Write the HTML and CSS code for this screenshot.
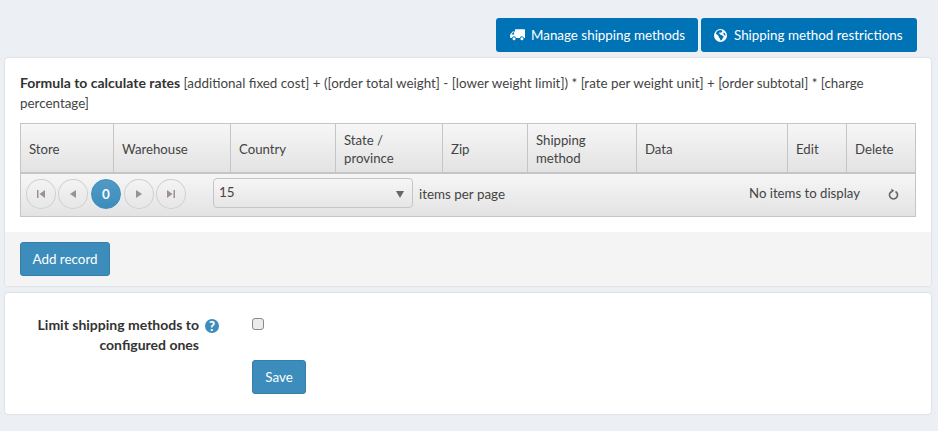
FILE: index.html

```html
<!DOCTYPE html>
<html lang="en">
<head>
    <meta charset="UTF-8">
    <meta name="viewport" content="width=device-width, initial-scale=1.0">
    <title>Shipping rates</title>
    <link rel="stylesheet" href="styles.css">
</head>
<body>
    <main class="page">
        <div class="top-actions">
            <a class="btn btn-top btn-manage">
                <svg class="btn-icon" viewBox="0 0 18 14" width="15" height="12"><path fill="#fff" d="M6 0h11a1 1 0 0 1 1 1v9.500h-1.200a2.600 2.600 0 0 0-5.100 0H7.300a2.600 2.600 0 0 0-5.100 0H1a1 1 0 0 1-1-1V6.600L3.200 2.800H6zM3.800 3.700 1.700 6.300h3.200V3.700zM4.800 9.600a1.800 1.800 0 1 1 0 3.600 1.800 1.800 0 0 1 0-3.600zm9.500 0a1.800 1.800 0 1 1 0 3.600 1.800 1.800 0 0 1 0-3.600z"/></svg>
                Manage shipping methods
            </a>
            <a class="btn btn-top btn-restrict">
                <svg class="btn-icon" viewBox="0 0 14 14" width="13" height="13"><path fill="#fff" fill-rule="evenodd" d="M7 0a7 7 0 1 1 0 14A7 7 0 0 1 7 0zM3.200 2.400 2 5.200l2.600 1.700.6 2 1.200 1.300.6 2.300 1.300-.6 1.300-2.300.9-1.400-1.500-1.300-2-.6-.8-1.100L5 4.800l1-1 1.600.2L9 2.600 7.900 1.200 5.400 1.300zM10.600 3.400 10 5l1 1.600 1.600.4a5.800 5.800 0 0 0-2-3.600z"/></svg>
                Shipping method restrictions
            </a>
        </div>

        <section class="card">
            <div class="card-body">
                <p class="formula"><strong>Formula to calculate rates</strong> [additional fixed cost] + ([order total weight] - [lower weight limit]) * [rate per weight unit] + [order subtotal] * [charge percentage]</p>
                <div class="grid">
                    <div class="grid-header">
                        <div class="grid-th">Store</div>
                        <div class="grid-th">Warehouse</div>
                        <div class="grid-th">Country</div>
                        <div class="grid-th">State /<br>province</div>
                        <div class="grid-th">Zip</div>
                        <div class="grid-th">Shipping<br>method</div>
                        <div class="grid-th">Data</div>
                        <div class="grid-th">Edit</div>
                        <div class="grid-th">Delete</div>
                    </div>
                    <div class="pager">
                        <div class="pager-nav">
                            <span class="page-btn"><svg viewBox="0 0 8 8" width="8" height="8"><path d="M0 0h1.500v8H0zM8 0v8L2.500 4z"/></svg></span>
                            <span class="page-btn"><svg viewBox="0 0 8 8" width="8" height="8"><path d="M7 0v8L1 4z"/></svg></span>
                            <span class="page-btn current">0</span>
                            <span class="page-btn"><svg viewBox="0 0 8 8" width="8" height="8"><path d="M1 0v8l6-4z"/></svg></span>
                            <span class="page-btn"><svg viewBox="0 0 8 8" width="8" height="8"><path d="M6.500 0H8v8H6.500zM0 0v8l5.500-4z"/></svg></span>
                        </div>
                        <div class="page-size">15<span class="caret"></span></div>
                        <span class="per-page">items per page</span>
                        <span class="pager-info">No items to display</span>
                        <svg class="refresh" viewBox="0 0 12 12" width="11" height="12"><path fill="none" stroke="#666" stroke-width="1.800" d="M3.800 3.200a4.400 4.400 0 1 0 4.400 0"/><path fill="#666" d="M3.600 0v5l3.200-2.500z"/></svg>
                    </div>
                </div>
            </div>
            <div class="card-footer">
                <button class="btn btn-primary btn-add">Add record</button>
            </div>
        </section>

        <section class="card settings">
            <div class="form-row">
                <div class="form-label">
                    <label class="label-text">Limit shipping methods to configured ones</label>
                    <span class="help">?</span>
                </div>
                <div class="form-value">
                    <span class="checkbox"></span>
                    <button class="btn btn-primary btn-save">Save</button>
                </div>
            </div>
        </section>
    </main>
</body>
</html>
```

FILE: styles.css

```css
/* General styles */
body {
    font-family: "Lato", "Open Sans", sans-serif;
    font-size: 13.4px;
    line-height: 20px;
    color: #444;
    margin: 0;
    padding: 0;
    background-color: #ecf0f5;
    overflow: hidden;
}

.page {
    padding: 18px 7px 0 5px;
}

/* Buttons */
.btn {
    display: inline-flex;
    align-items: center;
    justify-content: center;
    box-sizing: border-box;
    height: 34px;
    border-radius: 3px;
    color: #fff;
    font: inherit;
    cursor: pointer;
}

.top-actions {
    display: flex;
    justify-content: flex-end;
    gap: 3px;
    padding-right: 14px;
    margin-bottom: 6px;
}

.btn-top {
    background-color: #0073b7;
    justify-content: flex-start;
}

.btn-manage {
    width: 202px;
    gap: 6px;
    padding-left: 14px;
}

.btn-restrict {
    width: 216px;
    gap: 7px;
    padding-left: 13px;
}

.btn-icon {
    flex: none;
}

.btn-primary {
    background-color: #3c8dbc;
    border: 1px solid #367fa9;
    padding: 0;
}

.btn-add {
    width: 90px;
}

.btn-save {
    width: 54px;
}

/* Cards */
.card {
    background: #fff;
    border-radius: 3px;
    box-shadow: 0 0 2px rgba(0, 0, 0, 0.2);
    margin-bottom: 7px;
}

.card-body {
    padding: 15px;
}

.formula {
    margin: 0 0 10px;
}

.formula strong {
    font-size: 14px;
    color: #333;
}

.card-footer {
    background: #f4f4f4;
    padding: 10px 15px;
    border-radius: 0 0 3px 3px;
    height: 34px;
}

/* Table */
.grid {
    border: 1px solid #c5c5c5;
}

.grid-header {
    display: grid;
    grid-template-columns: 93px 117px 105px 107px 85px 109px 151px 59px 1fr;
    height: 48px;
    border-bottom: 2px solid #c5c5c5;
    background: linear-gradient(#f6f6f6, #e3e3e3);
    font-size: 13.200px;
}

.grid-th {
    display: flex;
    align-items: center;
    box-sizing: border-box;
    padding: 2px 8px 0;
    border-right: 1px solid #c5c5c5;
    line-height: 18px;
}

.grid-th:last-child {
    border-right: none;
}

.pager {
    display: flex;
    align-items: flex-start;
    height: 42px;
    padding: 4px 16px 0 5px;
    box-sizing: border-box;
    background: linear-gradient(#f6f6f6, #e3e3e3);
}

.pager-nav {
    display: flex;
    gap: 2.700px;
    width: 161px;
    margin-top: 1px;
    margin-right: 26px;
}

.page-btn {
    display: flex;
    flex: none;
    align-items: center;
    justify-content: center;
    box-sizing: border-box;
    width: 29.500px;
    height: 30px;
    border: 1px solid #d0d0d0;
    border-radius: 50%;
}

.page-btn svg {
    fill: #9a9292;
}

.page-btn.current {
    width: 30px;
    margin: 0 0.500px;
    background: linear-gradient(#519ac5, #3c8dbc);
    border-color: #3c8dbc;
    color: #fff;
    font-weight: bold;
}

.page-size {
    position: relative;
    box-sizing: border-box;
    width: 200px;
    height: 30px;
    line-height: 26px;
    padding: 0 5px;
    border: 1px solid #c5c5c5;
    border-radius: 4px;
    background: linear-gradient(#f6f6f6, #e6e6e6);
}

.caret {
    position: absolute;
    top: 12px;
    right: 8px;
    border-left: 4px solid transparent;
    border-right: 4px solid transparent;
    border-top: 7px solid #666;
}

.per-page {
    margin-left: 6px;
    margin-top: 6px;
}

.pager-info {
    margin-left: auto;
    margin-top: 5px;
    margin-right: 28px;
    font-size: 13.200px;
}

.refresh {
    margin-top: 10px;
}

/* Settings form */
.settings {
    height: 121px;
}

.form-row {
    display: flex;
    padding-top: 22px;
}

.form-label {
    display: flex;
    justify-content: flex-end;
    width: 214px;
    gap: 6px;
}

.label-text {
    width: 170px;
    text-align: right;
    font-size: 14px;
    font-weight: bold;
    color: #333;
}

.help {
    display: flex;
    align-items: center;
    justify-content: center;
    width: 14px;
    height: 14px;
    margin-top: 4px;
    border-radius: 50%;
    background: #3c8dbc;
    color: #fff;
    font-size: 13px;
    font-weight: 900;
    line-height: 14px;
}

.form-value {
    display: flex;
    flex-direction: column;
    align-items: flex-start;
    padding-left: 33px;
}

.checkbox {
    box-sizing: border-box;
    width: 12px;
    height: 12px;
    margin-top: 3px;
    margin-bottom: 30px;
    border: 1px solid #8a8a8a;
    border-radius: 3px;
    background: #ececec;
}
```
